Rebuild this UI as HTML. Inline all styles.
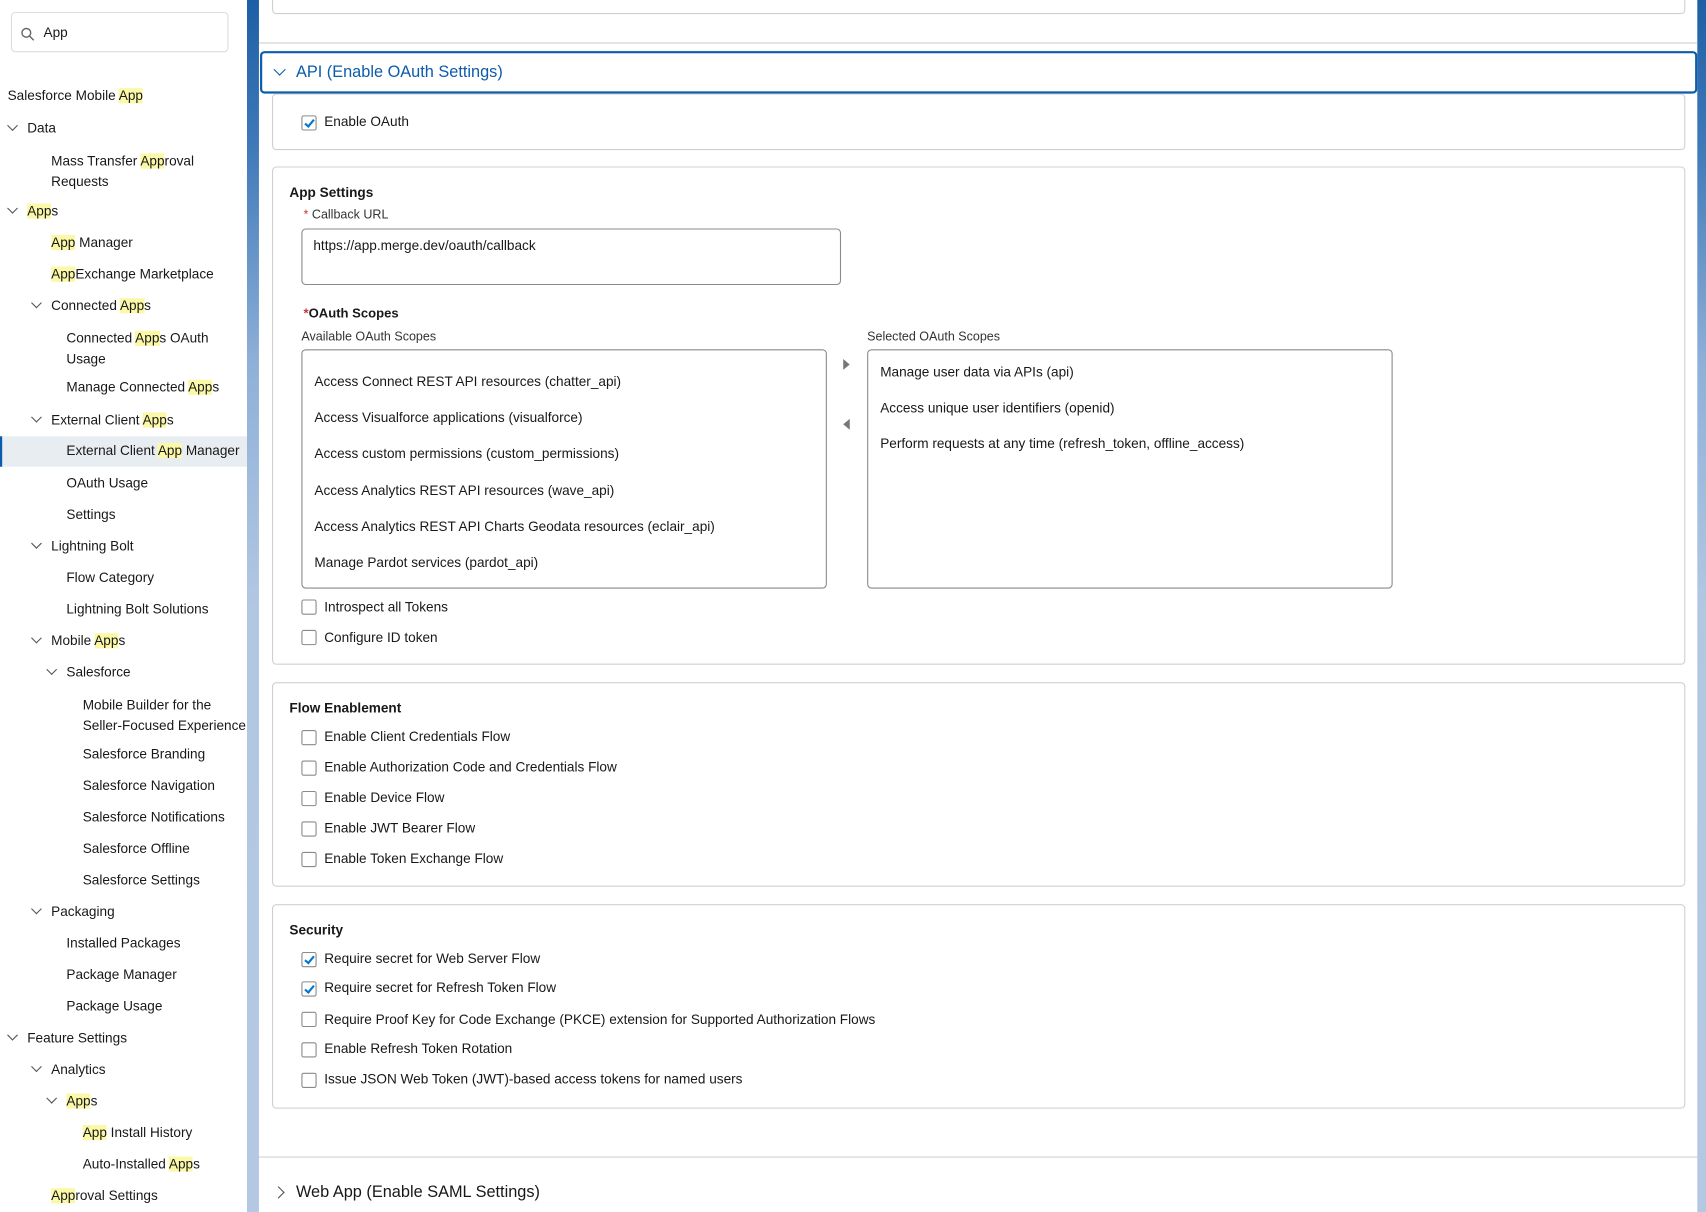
<!DOCTYPE html>
<html><head><meta charset="utf-8"><style>
*{box-sizing:border-box;margin:0;padding:0}
html,body{width:1706px;height:1212px;overflow:hidden;background:#fff}
#w{position:absolute;left:0;top:0;width:1568px;height:1114px;transform:scale(1.08801,1.08797);transform-origin:0 0;font-family:"Liberation Sans",Arial,sans-serif;color:#181818;font-size:12.5px}
.a{position:absolute;white-space:nowrap}
.h{background:#fbf9a8}
.bg{background:linear-gradient(180deg,#1d5fa5 0%,#3f79b8 12%,#8fb0d8 30%,#b2c7e2 50%,#b4c8e3 100%)}
.card{position:absolute;left:250px;width:1299px;border:1px solid #d0d0d0;border-radius:4px;background:#fff}
.cb{position:absolute;width:14px;height:14px;border:1px solid #8a8a8a;border-radius:2px;background:#fff}
.cb.on::after{content:"";position:absolute;left:4px;top:1px;width:3px;height:7px;border:solid #0176d3;border-width:0 2px 2px 0;transform:rotate(40deg)}
.chev{position:absolute;width:7px;height:7px;border:solid #555;border-width:0 1.3px 1.3px 0;transform:rotate(45deg)}
.lb{position:absolute;border:1px solid #8a8a8a;border-radius:4px;background:#fff}
</style></head><body><div id="w">
<!-- sidebar -->
<div class="a" style="left:10px;top:11px;width:200px;height:37px;border:1px solid #ddd;border-radius:4px"></div>
<svg class="a" style="left:19px;top:25px" width="13" height="13" viewBox="0 0 13 13"><circle cx="5.2" cy="5.2" r="4" fill="none" stroke="#666" stroke-width="1.3"/><path d="M8.2 8.2L12 12" stroke="#666" stroke-width="1.3"/></svg>
<div class="a" style="left:40px;top:23px">App</div>
<div class="a" style="left:0;top:401px;width:227px;height:28px;background:#e8edf2;border-left:2px solid #0b5cab"></div>
<div class="a" style="left:7px;top:81px">Salesforce Mobile <span class="h">App</span></div>
<div class="chev" style="left:8px;top:112px"></div><div class="a" style="left:25px;top:111px">Data</div>
<div class="a" style="left:47px;top:139px;line-height:19px">Mass Transfer <span class="h">App</span>roval<br>Requests</div>
<div class="chev" style="left:8px;top:188px"></div><div class="a" style="left:25px;top:187px"><span class="h">App</span>s</div>
<div class="a" style="left:47px;top:216px"><span class="h">App</span> Manager</div>
<div class="a" style="left:47px;top:245px"><span class="h">App</span>Exchange Marketplace</div>
<div class="chev" style="left:30px;top:275px"></div><div class="a" style="left:47px;top:274px">Connected <span class="h">App</span>s</div>
<div class="a" style="left:61px;top:302px;line-height:19px">Connected <span class="h">App</span>s OAuth<br>Usage</div>
<div class="a" style="left:61px;top:349px">Manage Connected <span class="h">App</span>s</div>
<div class="chev" style="left:30px;top:380px"></div><div class="a" style="left:47px;top:379px">External Client <span class="h">App</span>s</div>
<div class="a" style="left:61px;top:407px">External Client <span class="h">App</span> Manager</div>
<div class="a" style="left:61px;top:437px">OAuth Usage</div>
<div class="a" style="left:61px;top:466px">Settings</div>
<div class="chev" style="left:30px;top:496px"></div><div class="a" style="left:47px;top:495px">Lightning Bolt</div>
<div class="a" style="left:61px;top:524px">Flow Category</div>
<div class="a" style="left:61px;top:553px">Lightning Bolt Solutions</div>
<div class="chev" style="left:30px;top:583px"></div><div class="a" style="left:47px;top:582px">Mobile <span class="h">App</span>s</div>
<div class="chev" style="left:44px;top:612px"></div><div class="a" style="left:61px;top:611px">Salesforce</div>
<div class="a" style="left:76px;top:639px;line-height:19px">Mobile Builder for the<br>Seller-Focused Experience</div>
<div class="a" style="left:76px;top:686px">Salesforce Branding</div>
<div class="a" style="left:76px;top:715px">Salesforce Navigation</div>
<div class="a" style="left:76px;top:744px">Salesforce Notifications</div>
<div class="a" style="left:76px;top:773px">Salesforce Offline</div>
<div class="a" style="left:76px;top:802px">Salesforce Settings</div>
<div class="chev" style="left:30px;top:832px"></div><div class="a" style="left:47px;top:831px">Packaging</div>
<div class="a" style="left:61px;top:860px">Installed Packages</div>
<div class="a" style="left:61px;top:889px">Package Manager</div>
<div class="a" style="left:61px;top:918px">Package Usage</div>
<div class="chev" style="left:8px;top:948px"></div><div class="a" style="left:25px;top:947px">Feature Settings</div>
<div class="chev" style="left:30px;top:977px"></div><div class="a" style="left:47px;top:976px">Analytics</div>
<div class="chev" style="left:44px;top:1006px"></div><div class="a" style="left:61px;top:1005px"><span class="h">App</span>s</div>
<div class="a" style="left:76px;top:1034px"><span class="h">App</span> Install History</div>
<div class="a" style="left:76px;top:1063px">Auto-Installed <span class="h">App</span>s</div>
<div class="a" style="left:47px;top:1092px"><span class="h">App</span>roval Settings</div>
<!-- blue strips -->
<div class="a bg" style="left:227px;top:0;width:11px;height:1114px"></div>
<div class="a bg" style="left:1560px;top:0;width:8px;height:1114px"></div>
<!-- main -->
<div class="card" style="top:-10px;height:23px"></div>
<div class="a" style="left:238px;top:39px;width:1322px;height:1px;background:#d0d0d0"></div>
<div class="a" style="left:239px;top:47px;width:1321px;height:39px;border:2px solid #0b5cab;border-radius:4px"></div>
<div class="a" style="left:253px;top:60px;width:8px;height:8px;border:solid #0b5cab;border-width:0 1.6px 1.6px 0;transform:rotate(45deg)"></div>
<div class="a" style="left:272px;top:58px;font-size:15px;color:#0b5cab">API (Enable OAuth Settings)</div>
<div class="card" style="top:86px;height:52px"></div>
<div class="cb on" style="left:277px;top:106px"></div><div class="a" style="left:298px;top:105px">Enable OAuth</div>
<div class="card" style="top:153px;height:458px"></div>
<div class="a" style="left:266px;top:170px;font-weight:bold">App Settings</div>
<div class="a" style="left:279px;top:192px;font-size:11.5px;color:#333"><span style="color:#c23934">*</span> Callback URL</div>
<div class="lb" style="left:277px;top:210px;width:496px;height:52px"></div>
<div class="a" style="left:288px;top:219px">https://app.merge.dev/oauth/callback</div>
<div class="a" style="left:279px;top:281px;font-weight:bold;font-size:12px"><span style="color:#c23934">*</span>OAuth Scopes</div>
<div class="a" style="left:277px;top:304px;font-size:11.5px;color:#333">Available OAuth Scopes</div>
<div class="a" style="left:797px;top:304px;font-size:11.5px;color:#333">Selected OAuth Scopes</div>
<div class="lb" style="left:277px;top:321px;width:483px;height:220px"></div>
<div class="lb" style="left:797px;top:321px;width:483px;height:220px"></div>
<div class="a" style="left:289px;top:344px">Access Connect REST API resources (chatter_api)</div>
<div class="a" style="left:289px;top:377px">Access Visualforce applications (visualforce)</div>
<div class="a" style="left:289px;top:410px">Access custom permissions (custom_permissions)</div>
<div class="a" style="left:289px;top:444px">Access Analytics REST API resources (wave_api)</div>
<div class="a" style="left:289px;top:477px">Access Analytics REST API Charts Geodata resources (eclair_api)</div>
<div class="a" style="left:289px;top:510px">Manage Pardot services (pardot_api)</div>
<div class="a" style="left:809px;top:335px">Manage user data via APIs (api)</div>
<div class="a" style="left:809px;top:368px">Access unique user identifiers (openid)</div>
<div class="a" style="left:809px;top:401px">Perform requests at any time (refresh_token, offline_access)</div>
<div class="a" style="left:775px;top:330px;border-left:6px solid #777;border-top:5px solid transparent;border-bottom:5px solid transparent"></div>
<div class="a" style="left:775px;top:385px;border-right:6px solid #777;border-top:5px solid transparent;border-bottom:5px solid transparent"></div>
<div class="cb" style="left:277px;top:551px"></div><div class="a" style="left:298px;top:551px">Introspect all Tokens</div>
<div class="cb" style="left:277px;top:579px"></div><div class="a" style="left:298px;top:579px">Configure ID token</div>
<div class="card" style="top:627px;height:188px"></div>
<div class="a" style="left:266px;top:644px;font-weight:bold">Flow Enablement</div>
<div class="cb" style="left:277px;top:671px"></div><div class="a" style="left:298px;top:670px">Enable Client Credentials Flow</div>
<div class="cb" style="left:277px;top:699px"></div><div class="a" style="left:298px;top:698px">Enable Authorization Code and Credentials Flow</div>
<div class="cb" style="left:277px;top:727px"></div><div class="a" style="left:298px;top:726px">Enable Device Flow</div>
<div class="cb" style="left:277px;top:755px"></div><div class="a" style="left:298px;top:754px">Enable JWT Bearer Flow</div>
<div class="cb" style="left:277px;top:783px"></div><div class="a" style="left:298px;top:782px">Enable Token Exchange Flow</div>
<div class="card" style="top:831px;height:188px"></div>
<div class="a" style="left:266px;top:848px;font-weight:bold">Security</div>
<div class="cb on" style="left:277px;top:875px"></div><div class="a" style="left:298px;top:874px">Require secret for Web Server Flow</div>
<div class="cb on" style="left:277px;top:902px"></div><div class="a" style="left:298px;top:901px">Require secret for Refresh Token Flow</div>
<div class="cb" style="left:277px;top:930px"></div><div class="a" style="left:298px;top:930px">Require Proof Key for Code Exchange (PKCE) extension for Supported Authorization Flows</div>
<div class="cb" style="left:277px;top:958px"></div><div class="a" style="left:298px;top:957px">Enable Refresh Token Rotation</div>
<div class="cb" style="left:277px;top:986px"></div><div class="a" style="left:298px;top:985px">Issue JSON Web Token (JWT)-based access tokens for named users</div>
<div class="a" style="left:238px;top:1063px;width:1322px;height:1px;background:#d0d0d0"></div>
<div class="a" style="left:252px;top:1092px;width:8px;height:8px;border:solid #555;border-width:0 1.4px 1.4px 0;transform:rotate(-45deg)"></div>
<div class="a" style="left:272px;top:1087px;font-size:15px">Web App (Enable SAML Settings)</div>
</div></body></html>
